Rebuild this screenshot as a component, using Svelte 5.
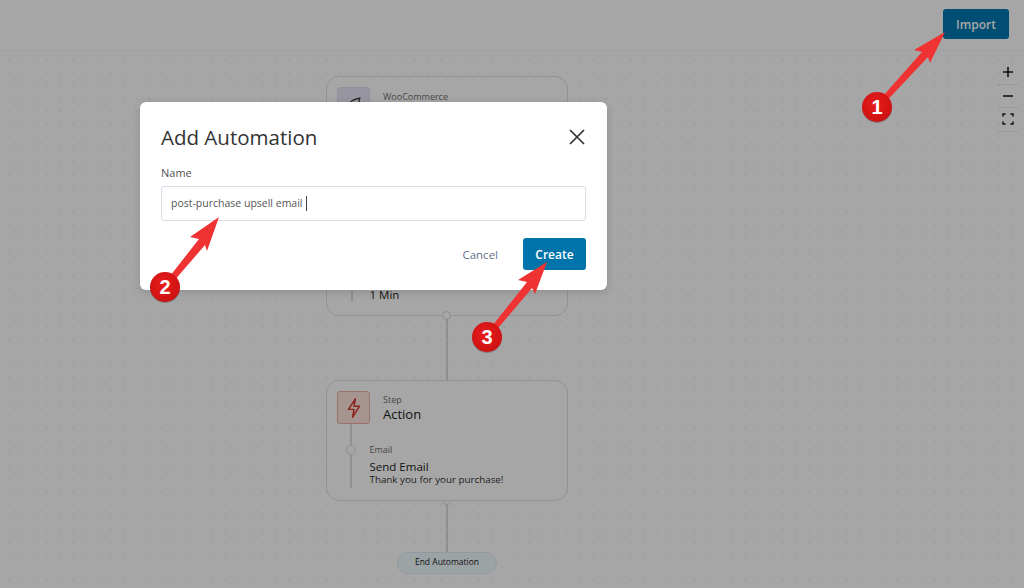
<script lang="ts">
	const arrows = [
		{ n: 1, cx: 877, cy: 107, points: '945,32 914,50 922,52 875,105 879,109 928,57 930,63' },
		{ n: 2, cx: 165, cy: 287, points: '219,217 190,237 199,239 163,285 167,289 205,245 207,251' },
		{ n: 3, cx: 487, cy: 337, points: '547,262 518,280 527,282 485,335 489,339 532,288 535,294' }
	];
</script>

<div class="page">
	<header class="topbar">
		<button type="button" class="import">Import</button>
	</header>

	<main class="canvas">
		<div class="zoom-controls">
			<button type="button" aria-label="Zoom in">
				<svg viewBox="0 0 12 12" width="12" height="12"><path d="M1 6h10M6 1v10" /></svg>
			</button>
			<button type="button" aria-label="Zoom out">
				<svg viewBox="0 0 12 12" width="12" height="12"><path d="M1 6h10" /></svg>
			</button>
			<button type="button" aria-label="Fit view">
				<svg viewBox="0 0 12 12" width="12" height="12" class="thin"><path d="M1 3.500V1h2.500M8.500 1H11v2.500M11 8.500V11H8.500M3.500 11H1V8.500" /></svg>
			</button>
		</div>

		<div class="flow">
			<section class="node trigger">
				<div class="node-head">
					<div class="node-icon woo">
						<svg viewBox="0 0 24 24" width="20" height="20"><path d="M4 15c3-6 8-9 15-10-1 7-4 12-10 15z" /></svg>
					</div>
					<div>
						<p class="eyebrow">WooCommerce</p>
					</div>
				</div>
				<div class="delay">
					<span class="stub"></span>
					<strong>1 Min</strong>
				</div>
			</section>

			<div class="connector first"><span class="dot"></span></div>

			<section class="node action">
				<div class="node-head">
					<div class="node-icon bolt">
						<svg viewBox="0 0 24 24" width="22" height="22"><path d="M13.500 2 6 13.500h6L10.500 22 18 10h-6z" /></svg>
					</div>
					<div>
						<p class="eyebrow">Step</p>
						<h3>Action</h3>
					</div>
				</div>
				<div class="step">
					<div class="rail"><span class="rail-dot"></span></div>
					<div class="step-text">
						<p class="eyebrow">Email</p>
						<h4>Send Email</h4>
						<p class="sub">Thank you for your purchase!</p>
					</div>
				</div>
			</section>

			<div class="connector second"><span class="dot"></span></div>

			<div class="end">End Automation</div>
		</div>
	</main>

	<div class="overlay">
		<div class="modal">
			<div class="modal-head">
				<h2>Add Automation</h2>
				<button type="button" class="close" aria-label="Close">
					<svg viewBox="0 0 16 16" width="16" height="16"><path d="M1 1l14 14M15 1 1 15" /></svg>
				</button>
			</div>
			<label for="name">Name</label>
			<div id="name" class="field">post-purchase upsell email <span class="caret"></span></div>
			<div class="actions">
				<button type="button" class="cancel">Cancel</button>
				<button type="button" class="create">Create</button>
			</div>
		</div>
	</div>

	<svg class="marks" viewBox="0 0 1024 588" width="1024" height="588">
		<defs>
			<radialGradient id="badge" cx="0.45" cy="0.4" r="0.7">
				<stop offset="0" stop-color="#e81c1c" />
				<stop offset="1" stop-color="#c81010" />
			</radialGradient>
		</defs>
		{#each arrows as a (a.n)}
			<polygon points={a.points} fill="#ef3333" />
			<circle cx={a.cx} cy={a.cy + 1} r="15" fill="#000" opacity="0.25" />
			<circle cx={a.cx} cy={a.cy} r="15" fill="url(#badge)" />
			<text x={a.cx} y={a.cy + 7} text-anchor="middle">{a.n}</text>
		{/each}
	</svg>
</div>

<style>
	:global(body) {
		margin: 0;
		font-family: 'Open Sans', 'Liberation Sans', sans-serif;
	}
	.page {
		position: relative;
		width: 1024px;
		height: 588px;
		overflow: hidden;
		background: #fff;
	}
	.topbar {
		height: 51px;
		box-sizing: border-box;
		display: flex;
		justify-content: flex-end;
		align-items: flex-start;
		padding: 9px 15px 0 0;
		border-bottom: 1px solid #f6f6f6;
		box-shadow: 0 1px 1px rgba(0, 0, 0, 0.02);
		background: #fff;
	}
	.import,
	.create {
		border: 0;
		border-radius: 3px;
		background: #0073aa;
		color: #fff;
		font: 600 12px 'Open Sans', sans-serif;
		padding: 0;
	}
	.import {
		width: 66px;
		height: 30px;
		background: #0079b3;
	}
	.canvas {
		position: relative;
		height: 537px;
		background-color: #fff;
		background-image: radial-gradient(circle, #e0e0e0 0.8px, transparent 1px);
		background-size: 12.700px 12.700px;
		background-position: 3px 3px;
	}
	.zoom-controls {
		position: absolute;
		top: 10px;
		right: 5px;
		width: 22px;
		display: flex;
		flex-direction: column;
	}
	.zoom-controls button {
		height: 23.500px;
		padding: 0;
		border: 0;
		border-bottom: 1px solid #efefef;
		background: transparent;
		display: flex;
		align-items: center;
		justify-content: center;
	}
	.zoom-controls svg {
		fill: none;
		stroke: #222;
		stroke-width: 1.600;
	}
	.zoom-controls svg.thin {
		stroke-width: 1.500;
	}
	.flow {
		display: flex;
		flex-direction: column;
		align-items: center;
		width: 242px;
		margin-left: 326px;
		padding-top: 25px;
	}
	.node {
		width: 100%;
		box-sizing: border-box;
		border: 1.500px solid #e1e1ea;
		border-radius: 13px;
		background: #fff;
		padding: 10px;
		display: flex;
		flex-direction: column;
	}
	.trigger {
		height: 240px;
		justify-content: space-between;
	}
	.action {
		height: 121px;
		position: relative;
		z-index: 1;
	}
	.node-head {
		display: flex;
		gap: 13px;
	}
	.node-head > div:last-child {
		padding-top: 3px;
	}
	.trigger .node-head > div:last-child {
		padding-top: 4px;
	}
	.node-icon {
		width: 33px;
		height: 33px;
		box-sizing: border-box;
		border-radius: 3px;
		display: flex;
		align-items: center;
		justify-content: center;
		flex: none;
	}
	.woo {
		background: #e8e6f6;
		border: 1px solid #e0def0;
	}
	.woo svg {
		fill: none;
		stroke: #333;
		stroke-width: 1.500;
	}
	.bolt {
		background: #ffe3df;
		border: 1px solid #eeb0a8;
	}
	.bolt svg {
		fill: none;
		stroke: #d9352a;
		stroke-width: 1.600;
		stroke-linejoin: round;
	}
	.eyebrow {
		margin: 0;
		font-size: 9px;
		line-height: 12px;
		color: #707070;
	}
	h3 {
		margin: 0;
		font-size: 13px;
		line-height: 16px;
		font-weight: 500;
		color: #1c1c1c;
	}
	.delay {
		display: flex;
		align-items: center;
		gap: 17px;
		margin: 0 0 3px 14px;
	}
	.stub {
		width: 1.500px;
		height: 15px;
		background: #ddd;
	}
	.delay strong {
		font-size: 11.500px;
		font-weight: 500;
		color: #222;
	}
	.step {
		display: flex;
		flex: 1;
		min-height: 0;
		gap: 18px;
		margin-left: 13px;
	}
	.rail {
		position: relative;
		width: 1.500px;
		margin-bottom: 2px;
		background: #ddd;
	}
	.rail-dot {
		position: absolute;
		left: -4px;
		top: 21px;
		width: 8px;
		height: 8px;
		border: 1.500px solid #ddd;
		border-radius: 50%;
		background: #fff;
	}
	.step-text {
		padding-top: 20px;
	}
	.step-text .eyebrow {
		margin-bottom: 4px;
	}
	h4 {
		margin: 0;
		font-size: 11.500px;
		line-height: 14px;
		font-weight: 500;
		color: #222;
	}
	.sub {
		margin: 0;
		font-size: 9.800px;
		line-height: 12px;
		color: #333;
	}
	.connector {
		position: relative;
		width: 1.500px;
		background: #dcdcdc;
	}
	.connector.first {
		height: 64px;
	}
	.connector.second {
		height: 51px;
	}
	.dot {
		position: absolute;
		left: -4px;
		top: -5px;
		width: 7px;
		height: 7px;
		border: 1.500px solid #dcdcdc;
		border-radius: 50%;
		background: #fff;
	}
	.end {
		width: 100px;
		height: 22px;
		box-sizing: border-box;
		border: 1.500px solid #e2ecf1;
		border-radius: 11px;
		background: #f0fafe;
		font-size: 8.500px;
		line-height: 18px;
		text-align: center;
		color: #222;
	}
	.overlay {
		position: absolute;
		inset: 0;
		z-index: 2;
		background: rgba(0, 0, 0, 0.35);
		padding: 102px 0 0 140px;
		box-sizing: border-box;
	}
	.modal {
		width: 467px;
		height: 188px;
		box-sizing: border-box;
		padding: 21px 21px 0;
		border-radius: 6px;
		background: #fff;
		box-shadow: 0 2px 8px rgba(0, 0, 0, 0.15);
	}
	.modal-head {
		display: flex;
		justify-content: space-between;
		align-items: center;
		height: 28px;
	}
	h2 {
		margin: 0;
		font-size: 20.500px;
		font-weight: 500;
		color: #333;
	}
	.close {
		padding: 0;
		border: 0;
		background: none;
		width: 16px;
		height: 16px;
		margin-right: 1px;
	}
	.close svg {
		display: block;
		fill: none;
		stroke: #333;
		stroke-width: 1.700;
	}
	label {
		display: block;
		margin-top: 14px;
		font-size: 11px;
		line-height: 15px;
		color: #555;
	}
	.field {
		height: 35px;
		box-sizing: border-box;
		margin-top: 6px;
		padding-left: 9px;
		border: 1px solid #dcdce8;
		border-radius: 3px;
		font-size: 10.500px;
		line-height: 33px;
		color: #555;
		display: flex;
		align-items: center;
		gap: 3px;
	}
	.caret {
		width: 1px;
		height: 15px;
		background: #444;
	}
	.actions {
		display: flex;
		justify-content: flex-end;
		align-items: center;
		gap: 25px;
		margin-top: 17px;
	}
	.cancel {
		padding: 0;
		border: 0;
		background: none;
		font: 400 11.500px 'Open Sans', sans-serif;
		color: #65708a;
	}
	.create {
		width: 63px;
		height: 32px;
	}
	.marks {
		position: absolute;
		inset: 0;
		z-index: 3;
		pointer-events: none;
	}
	.marks text {
		font: 700 20px 'Liberation Sans', sans-serif;
		fill: #fff;
	}
</style>
